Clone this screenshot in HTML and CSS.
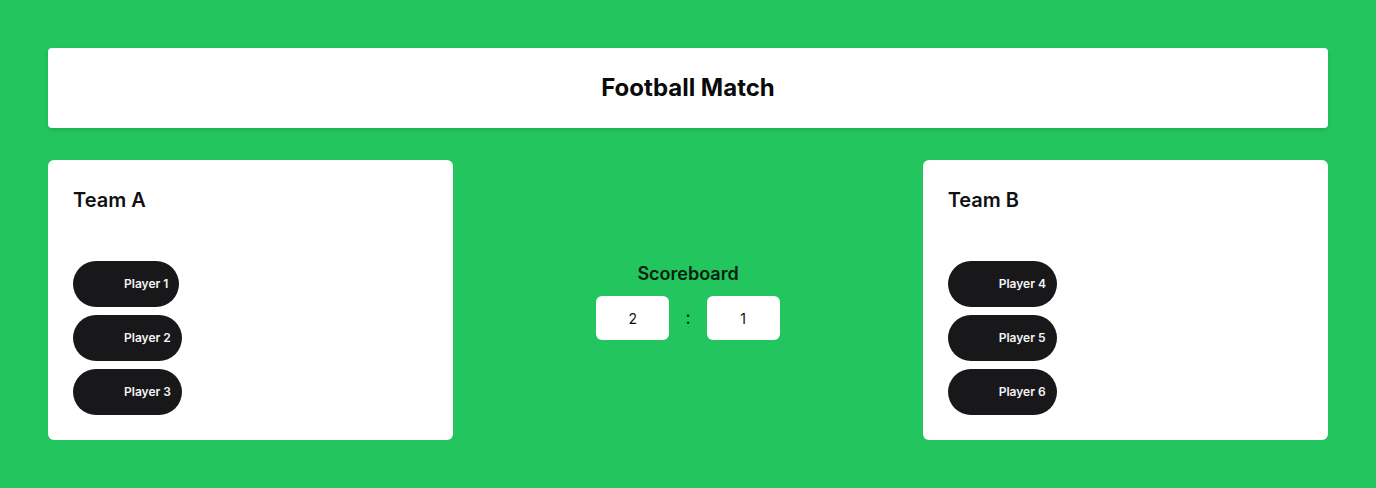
FILE: index.html
```html
<!DOCTYPE html>
<html>
<head>
<meta charset="utf-8">
<link rel="stylesheet" href="styles.css">
</head>
<body>
<div class="page">
  <header class="header"><h1 class="title">Football Match</h1></header>
  <main class="grid">
    <section class="card">
      <h2 class="team">Team A</h2>
      <ul class="players">
        <li class="pill"><span class="avatar"></span><span class="name">Player 1</span></li>
        <li class="pill"><span class="avatar"></span><span class="name">Player 2</span></li>
        <li class="pill"><span class="avatar"></span><span class="name">Player 3</span></li>
      </ul>
    </section>
    <section class="score">
      <h3 class="score-title">Scoreboard</h3>
      <div class="score-row">
        <div class="box">2</div>
        <span class="colon">:</span>
        <div class="box">1</div>
      </div>
    </section>
    <section class="card">
      <h2 class="team">Team B</h2>
      <ul class="players">
        <li class="pill"><span class="avatar"></span><span class="name">Player 4</span></li>
        <li class="pill"><span class="avatar"></span><span class="name">Player 5</span></li>
        <li class="pill"><span class="avatar"></span><span class="name">Player 6</span></li>
      </ul>
    </section>
  </main>
</div>
</body>
</html>
```
FILE: styles.css
```css
* { box-sizing: border-box; }
html, body { margin: 0; padding: 0; }
body {
  background: #22c55e;
  font-family: Inter, "Noto Sans", sans-serif;
  color: #111111;
  min-height: 488px;
}
.page {
  padding: 48px;
  display: flex;
  flex-direction: column;
  gap: 32px;
}
.header {
  background: #ffffff;
  height: 80px;
  border-radius: 4px;
  box-shadow: 0 2px 4px rgba(0,0,0,0.12);
  display: flex;
  align-items: center;
  justify-content: center;
}
.title {
  margin: 0;
  font-size: 24px;
  font-weight: 700;
  line-height: 32px;
  color: #0a0a0a;
}
.grid {
  display: grid;
  grid-template-columns: 1fr 1fr 1fr;
  gap: 32px;
}
.card {
  background: #ffffff;
  border-radius: 6px;
  height: 280px;
  padding: 26px 25px 25px 25px;
  display: flex;
  flex-direction: column;
  justify-content: space-between;
}
.team {
  margin: 0;
  font-size: 20px;
  font-weight: 600;
  line-height: 28px;
  color: #111111;
}
.players {
  list-style: none;
  margin: 0;
  padding: 0;
  display: flex;
  flex-direction: column;
  align-items: flex-start;
  gap: 8px;
}
.pill {
  background: #18181b;
  border-radius: 9999px;
  padding: 3px 11px 3px 3px;
  display: flex;
  align-items: center;
  gap: 8px;
  height: 46px;
}
.avatar {
  width: 40px;
  height: 40px;
  border-radius: 50%;
  background: #18181b;
}
.name {
  color: #f4f4f5;
  font-size: 12px;
  font-weight: 600;
  line-height: 16px;
}
.score {
  display: flex;
  flex-direction: column;
  align-items: center;
  justify-content: center;
  gap: 10px;
  padding-top: 2px;
}
.score-title {
  margin: 0;
  font-size: 18px;
  font-weight: 600;
  line-height: 24px;
  color: #0a1f10;
}
.score-row {
  display: flex;
  align-items: center;
  gap: 16px;
}
.box {
  background: #ffffff;
  border-radius: 6px;
  height: 44px;
  width: 73px;
  display: flex;
  align-items: center;
  justify-content: center;
  font-size: 14px;
  color: #111111;
}
.colon {
  font-size: 18px;
  color: #111111;
  line-height: 24px;
}
```
